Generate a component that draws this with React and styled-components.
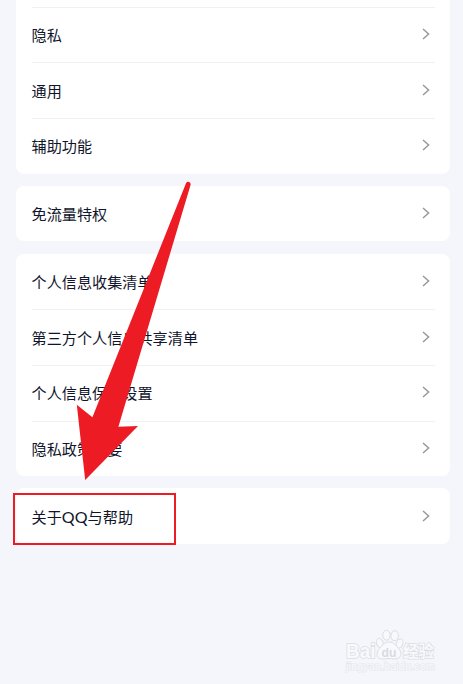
import React from 'react';
import styled, { createGlobalStyle } from 'styled-components';

const groups = [
    ['隐私', '通用', '辅助功能'],
    ['免流量特权'],
    ['个人信息收集清单', '第三方个人信息共享清单', '个人信息保护设置', '隐私政策摘要'],
];

function SettingRow({ children }) {
    return (
        <Row>
            <Label>{children}</Label>
            <Chevron viewBox="0 0 8 12">
                <path d="M1 1 L6.6 6 L1 11" />
            </Chevron>
        </Row>
    );
}

export default function App() {
    return (
        <Page>
            <GlobalStyle />
            <List>
                {groups.map((items, index) => (
                    <Card key={items[0]} $cut={index === 0}>
                        {items.map(item => <SettingRow key={item}>{item}</SettingRow>)}
                    </Card>
                ))}
                <Card>
                    <SettingRow>关于<Latin>QQ</Latin>与帮助</SettingRow>
                </Card>
            </List>
            <Highlight />
            <Arrow viewBox="0 0 463 684">
                <path d="M186 183.2 Q187.4 181 189.3 182.1 Q191.2 183.2 190.4 185.4 L118.4 426.8 L138 426 L85.2 480 L76.8 404.8 L92.4 417.2 Z" />
            </Arrow>
            <Watermark viewBox="0 0 100 50">
                <Brand x="6" y="29.5" textLength="29.5" lengthAdjust="spacingAndGlyphs">Bai</Brand>
                <g fill="#f8f9fc" stroke="#dcdee2" strokeWidth="1">
                    <ellipse cx="39.8" cy="15" rx="3.3" ry="4.6" transform="rotate(-18 39.8 15)" />
                    <ellipse cx="46.5" cy="7.2" rx="3.7" ry="4.9" />
                    <ellipse cx="54.7" cy="7.7" rx="3.7" ry="4.9" transform="rotate(8 54.7 7.7)" />
                    <ellipse cx="59.6" cy="15.5" rx="3.3" ry="4.6" transform="rotate(18 59.6 15.5)" />
                    <path d="M49 14 C54 14 55.5 17.5 58.5 20.5 C63 25 61 31 55 31 C52 31 51 30.5 49 30.5 C46 30.5 45 31 43 31 C36 31 35.5 25 39.5 20.5 C42.5 17.5 44 14 49 14 Z" />
                </g>
                <PawText x="41.5" y="28.5" textLength="15" lengthAdjust="spacingAndGlyphs">du</PawText>
                <Brand $cjk x="63" y="28.5" textLength="31" lengthAdjust="spacingAndGlyphs">经验</Brand>
                <Domain x="6" y="42" textLength="89" lengthAdjust="spacingAndGlyphs">jingyan.baidu.com</Domain>
            </Watermark>
        </Page>
    );
}

const GlobalStyle = createGlobalStyle`
    * {
        box-sizing: border-box;
    }

    body {
        margin: 0;
        background: #f4f6fb;
        font-family: 'Noto Sans CJK SC', sans-serif;
    }
`;

const Page = styled.div`
    position: relative;
    height: 684px;
    overflow: hidden;
    background: #f4f6fb;
`;

const List = styled.main`
    display: flex;
    flex-direction: column;
    gap: 12.2px;
    padding: 0 12.7px 0 15.5px;
`;

const Card = styled.section`
    padding: ${props => props.$cut ? '6.8px' : '0'} 15.5px 0 16px;
    border-radius: ${props => props.$cut ? '0 0 8px 8px' : '8px'};
    background: #fff;

    > :first-child {
        border-top-color: ${props => props.$cut ? '#f0f1f3' : 'transparent'};
    }
`;

const Row = styled.div`
    display: flex;
    align-items: center;
    justify-content: space-between;
    height: 55.63px;
    border-top: 1px solid #f0f1f3;
    padding-right: 4.5px;
`;

const Label = styled.span`
    padding-bottom: 2px;
    font-size: 15.15px;
    line-height: 22px;
    color: #10152b;
    white-space: nowrap;
`;

const Latin = styled.span`
    font-family: Lato, sans-serif;
    font-size: 16px;
    line-height: 0;
    letter-spacing: 0.1px;
`;

const Chevron = styled.svg`
    width: 8px;
    height: 12px;
    margin-bottom: 1.8px;
    fill: none;
    stroke: #999;
    stroke-width: 1.5;
`;

const Highlight = styled.div`
    position: absolute;
    left: 13px;
    top: 493px;
    width: 163px;
    height: 52px;
    border: 2px solid #ed1c24;
`;

const Arrow = styled.svg`
    position: absolute;
    left: 0;
    top: 0;
    width: 463px;
    height: 684px;
    fill: #ed1c24;
`;

const Watermark = styled.svg`
    position: absolute;
    left: 340px;
    top: 628px;
    width: 100px;
    height: 50px;
`;

const Brand = styled.text`
    font-family: ${props => props.$cjk ? "'Noto Sans CJK SC'" : "'Liberation Sans'"}, sans-serif;
    font-size: ${props => props.$cjk ? '15.5px' : '20px'};
    font-weight: bold;
    fill: #f8f9fc;
    stroke: #dcdee2;
    stroke-width: ${props => props.$cjk ? '1.4' : '1.6'};
    paint-order: stroke;
`;

const PawText = styled.text`
    font-family: 'Liberation Sans', sans-serif;
    font-size: 13px;
    font-weight: bold;
    fill: #d9dbe0;
`;

const Domain = styled.text`
    font-family: 'Liberation Sans', sans-serif;
    font-size: 10.5px;
    fill: #f8f9fc;
    stroke: #e5e7eb;
    stroke-width: 1.2;
    paint-order: stroke;
`;
